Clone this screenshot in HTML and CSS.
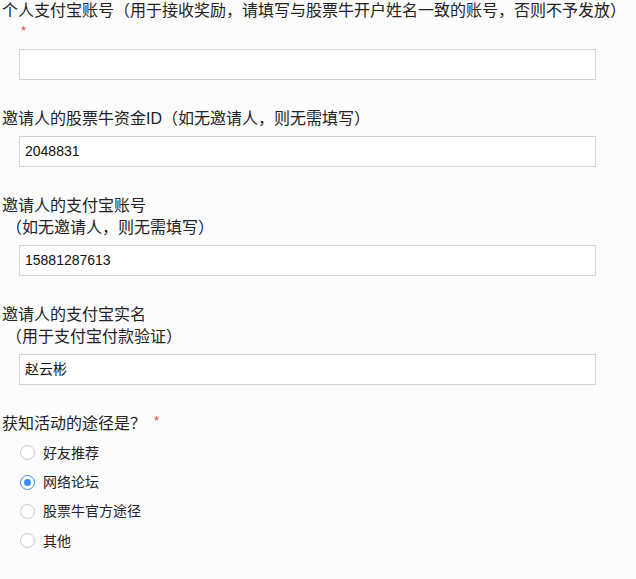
FILE: index.html
```html
<!DOCTYPE html>
<html lang="zh-CN">
<head>
<meta charset="utf-8">
<title>表单</title>
<link rel="stylesheet" href="styles.css">
</head>
<body>
<form class="form">
  <div class="field">
    <div class="label">个人支付宝账号（用于接收奖励，请填写与股票牛开户姓名一致的账号，否则不予发放）<span class="star-line"><span class="star">*</span></span></div>
    <div class="input"></div>
  </div>
  <div class="field">
    <div class="label">邀请人的股票牛资金ID（如无邀请人，则无需填写）</div>
    <div class="input">2048831</div>
  </div>
  <div class="field">
    <div class="label">邀请人的支付宝账号<span class="sub">（如无邀请人，则无需填写）</span></div>
    <div class="input">15881287613</div>
  </div>
  <div class="field">
    <div class="label">邀请人的支付宝实名<span class="sub">（用于支付宝付款验证）</span></div>
    <div class="input">赵云彬</div>
  </div>
  <div class="field">
    <div class="label label-q">获知活动的途径是？<span class="star star-inline">*</span></div>
    <div class="options">
      <div class="option"><span class="radio"></span><span class="opt-text">好友推荐</span></div>
      <div class="option"><span class="radio checked"></span><span class="opt-text">网络论坛</span></div>
      <div class="option"><span class="radio"></span><span class="opt-text">股票牛官方途径</span></div>
      <div class="option"><span class="radio"></span><span class="opt-text">其他</span></div>
    </div>
  </div>
</form>
</body>
</html>
```
FILE: styles.css
```css
html, body {
  margin: 0;
  padding: 0;
  background: #fcfcfc;
}
body {
  font-family: "Liberation Sans", "Noto Sans CJK SC", sans-serif;
  color: #222;
}
.form {
  display: flex;
  flex-direction: column;
  padding: 0 0 0 2px;
}
.field {
  display: flex;
  flex-direction: column;
  margin-bottom: 28px;
}
.label {
  font-size: 16px;
  line-height: 22px;
  height: auto;
  margin-bottom: 6px;
}
.label-q {
  height: 22px;
  margin-bottom: 3px;
}
.sub {
  display: block;
  padding-left: 4px;
}
.star-line {
  display: block;
  height: 21px;
  line-height: 12px;
  padding-left: 19px;
  padding-top: 2px;
  box-sizing: border-box;
}
.star {
  color: #e8413b;
  font-size: 13px;
  font-family: "Liberation Sans", sans-serif;
}
.star-inline {
  margin-left: 8px;
  position: relative;
  top: -4px;
}
.input {
  margin-left: 17px;
  width: 577px;
  height: 31px;
  box-sizing: border-box;
  border: 1px solid #d3d3d3;
  background: #fff;
  padding: 0 5px;
  font-size: 14px;
  line-height: 29px;
  color: #111;
}
.options {
  display: flex;
  flex-direction: column;
}
.option {
  display: flex;
  align-items: center;
  height: 29.4px;
  padding-left: 18px;
  font-size: 14px;
}
.radio {
  width: 15px;
  height: 15px;
  box-sizing: border-box;
  border: 1px solid #c9c9c9;
  border-radius: 50%;
  background: #fff;
  margin-right: 8px;
  position: relative;
}
.radio.checked {
  border-color: #3a8ee6;
}
.radio.checked::after {
  content: "";
  position: absolute;
  left: 3px;
  top: 3px;
  width: 7px;
  height: 7px;
  border-radius: 50%;
  background: #3a8ee6;
}
.opt-text {
  line-height: 20px;
}
```
